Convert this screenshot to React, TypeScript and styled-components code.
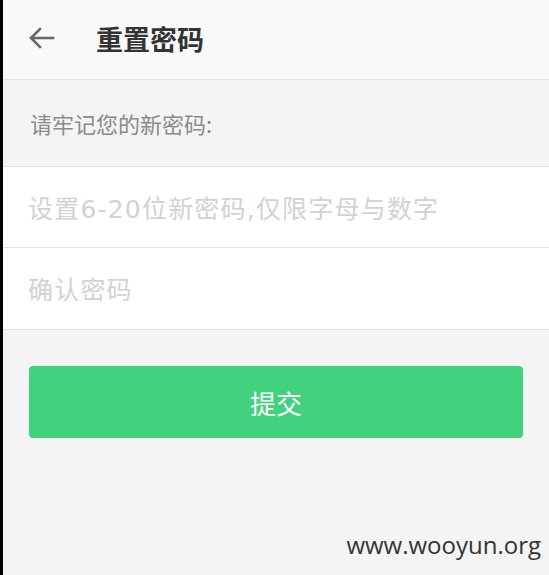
import styled, { createGlobalStyle } from "styled-components";

const GlobalStyle = createGlobalStyle`
  html, body {
    margin: 0;
    padding: 0;
    background: #f4f4f4;
  }
  * {
    box-sizing: border-box;
  }
`;

const Page = styled.div`
  width: 549px;
  height: 575px;
  border-left: 3px solid #000;
  background: #f4f4f4;
  display: flex;
  flex-direction: column;
  font-family: "Noto Sans CJK SC", "Noto Sans", sans-serif;
  overflow: hidden;
`;

const Header = styled.div`
  height: 80px;
  display: flex;
  align-items: center;
  background: #f9f9f9;
  border-bottom: 1px solid #e2e2e2;
  padding: 0 0 3px 23px;
`;

const BackButton = styled.button`
  border: none;
  background: none;
  padding: 0;
  width: 30px;
  height: 30px;
  display: flex;
  align-items: center;
  justify-content: center;
  cursor: pointer;
`;

const Title = styled.h1`
  margin: 0 0 0 40px;
  font-size: 27px;
  font-weight: 700;
  color: #333;
`;

const Hint = styled.div`
  height: 86px;
  display: flex;
  align-items: center;
  padding: 0 0 0 27px;
  font-size: 22px;
  color: #8a8a8a;
`;

const Fields = styled.div`
  background: #fff;
  border-top: 1px solid #e0e0e0;
  border-bottom: 1px solid #e0e0e0;
`;

const Field = styled.input<{ $last?: boolean }>`
  display: block;
  width: 100%;
  height: 81px;
  border: none;
  border-bottom: ${(p) => (p.$last ? "none" : "1px solid #e0e0e0")};
  padding: 4px 0 0 25px;
  font-family: "DejaVu Sans", "Noto Sans CJK SC", sans-serif;
  font-size: 25px;
  letter-spacing: 1.2px;
  color: #333;
  background: #fff;
  outline: none;
  caret-color: #e0b85a;

  &::placeholder {
    color: #d2d2d2;
  }
`;

const Submit = styled.button`
  margin: 36px 26px 0 26px;
  height: 72px;
  border: none;
  border-radius: 4px;
  background: #42d17d;
  color: #fff;
  font-family: inherit;
  font-size: 26px;
  cursor: pointer;
`;

const Watermark = styled.div`
  margin-top: auto;
  align-self: flex-end;
  padding: 0 8px 14px 0;
  font-family: "Open Sans", "Noto Sans", sans-serif;
  font-size: 24px;
  color: #333;
`;

function App() {
  return (
    <>
      <GlobalStyle />
      <Page>
        <Header>
          <BackButton aria-label="返回">
            <svg width="28" height="24" viewBox="0 0 28 24">
              <path
                d="M26 12H4M13 3L4 12L13 21"
                fill="none"
                stroke="#666"
                strokeWidth="2.6"
                strokeLinecap="square"
              />
            </svg>
          </BackButton>
          <Title>重置密码</Title>
        </Header>
        <Hint>请牢记您的新密码:</Hint>
        <Fields>
          <Field
            type="password"
            placeholder="设置6-20位新密码,仅限字母与数字"
            autoFocus
          />
          <Field type="password" placeholder="确认密码" $last />
        </Fields>
        <Submit>提交</Submit>
        <Watermark>www.wooyun.org</Watermark>
      </Page>
    </>
  );
}

export default App;
